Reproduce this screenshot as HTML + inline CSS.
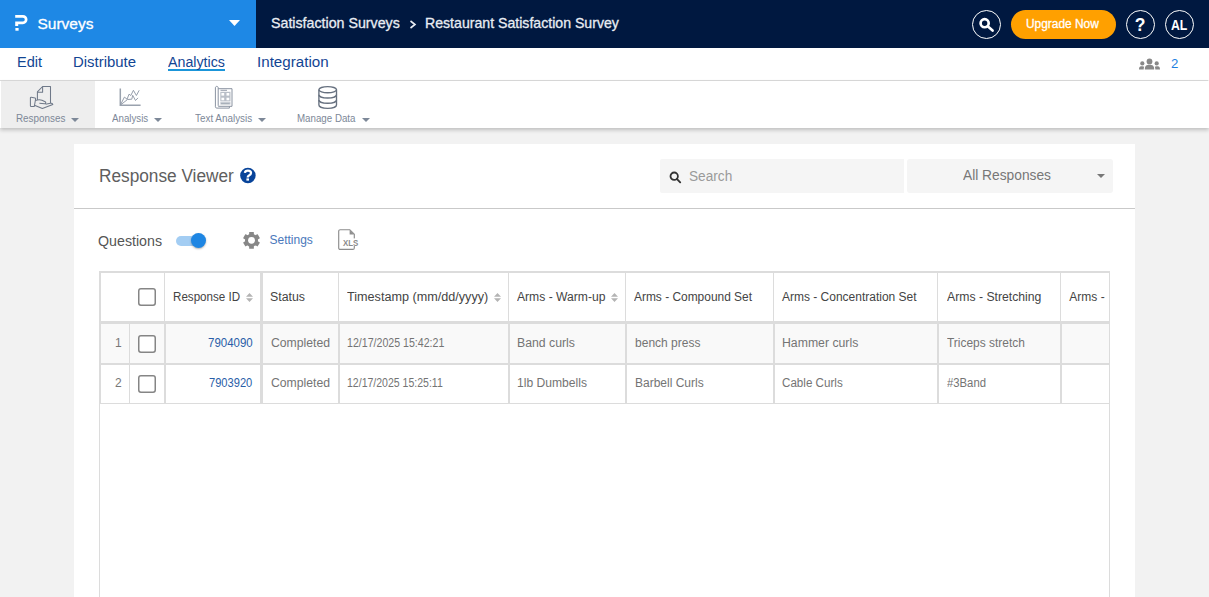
<!DOCTYPE html>
<html><head><meta charset="utf-8"><title>Response Viewer</title>
<style>
html,body{margin:0;padding:0;width:1209px;height:597px;overflow:hidden;background:#f2f2f2;font-family:"Liberation Sans",sans-serif;}
.t{position:absolute;white-space:pre;transform-origin:0 0;}
.a{position:absolute;}
svg{position:absolute;overflow:visible;}
</style></head><body>
<!-- header -->
<div class="a" style="left:0;top:0;width:256px;height:48px;background:#1e88e5"></div>
<div class="a" style="left:256px;top:0;width:953px;height:48px;background:#001840"></div>
<!-- logo -->
<svg style="left:0;top:0" width="40" height="40" viewBox="0 0 40 40">
 <path fill="#fff" d="M15.2 15 H22.9 A4.6 4.6 0 0 1 22.9 24.2 H18.2 V26.1 H15.2 V21.5 H22.9 A1.9 1.9 0 0 0 22.9 17.7 H15.2 Z"/>
 <rect x="15.4" y="28" width="3.2" height="2.7" fill="#fff"/>
</svg>
<svg style="left:229px;top:20px" width="11" height="7" viewBox="0 0 11 7"><path d="M0 0 H11 L5.5 6 Z" fill="#fff"/></svg>
<svg style="left:409px;top:20.3px" width="8" height="9" viewBox="0 0 8 9"><path d="M1.5 1 L6 4.5 L1.5 8" fill="none" stroke="#e9edf3" stroke-width="1.6"/></svg>
<!-- right icons -->
<div class="a" style="left:972px;top:10px;width:27px;height:27px;border:1px solid #fff;border-radius:50%"></div>
<svg style="left:979px;top:16px" width="16" height="16" viewBox="0 0 16 16"><circle cx="5.65" cy="7.2" r="4.05" fill="none" stroke="#fff" stroke-width="2.7"/><path d="M8.7 10.3 L13.6 14.6" stroke="#fff" stroke-width="2.6" stroke-linecap="round"/></svg>
<div class="a" style="left:1011px;top:10px;width:105px;height:29px;background:#ffa000;border-radius:15px"></div>
<div class="a" style="left:1126px;top:10px;width:27px;height:27px;border:1px solid #fff;border-radius:50%"></div>
<div class="a" style="left:1165px;top:10px;width:27px;height:27px;border:1px solid #fff;border-radius:50%"></div>

<!-- nav -->
<div class="a" style="left:0;top:48px;width:1209px;height:32px;background:#fff"></div>
<div class="a" style="left:0;top:80px;width:1208px;height:1px;background:#dcdcdc"></div>
<div class="a" style="left:168px;top:69px;width:57px;height:2px;background:#1b95d9"></div>
<svg style="left:1138px;top:58px" width="23" height="12" viewBox="0 0 23 12"><circle cx="11.5" cy="3.4" r="2.9" fill="#888"/><path d="M6.8 11.6 C6.8 7.4 8.8 6.8 11.5 6.8 C14.2 6.8 16.2 7.4 16.2 11.6 Z" fill="#888"/><circle cx="4.3" cy="5.4" r="2.1" fill="#888"/><path d="M1 11.6 C1 8.6 2.2 8.2 4.3 8.2 C5.3 8.2 5.9 8.4 6.2 8.7 C5.8 9.6 5.7 10.5 5.7 11.6 Z" fill="#888"/><circle cx="18.7" cy="5.4" r="2.1" fill="#888"/><path d="M22 11.6 C22 8.6 20.8 8.2 18.7 8.2 C17.7 8.2 17.1 8.4 16.8 8.7 C17.2 9.6 17.3 10.5 17.3 11.6 Z" fill="#888"/></svg>
<!-- toolbar -->
<div class="a" style="left:0;top:81px;width:1209px;height:47px;background:#fff;box-shadow:0 2px 4px rgba(0,0,0,0.22)"></div>
<div class="a" style="left:1px;top:81px;width:94px;height:47px;background:#eeeeee"></div>
<!-- responses icon -->
<svg style="left:27px;top:84px" width="29" height="27" viewBox="27 84 29 27" fill="none" stroke="#6f7989" stroke-width="1.05" stroke-linejoin="round">
 <path d="M37.4 100 V91.9 L42.6 86.5 H50.5 V103"/>
 <path d="M37.4 92.2 H42.6 V86.5"/>
 <path d="M30.4 97.8 C30.4 97.4 30.8 97.3 31.2 97.3 L35 98 C35.5 98.1 35.7 98.5 35.6 99 L34.4 106 C34.3 106.4 34 106.5 33.6 106.5 H31.1 C30.7 106.5 30.4 106.2 30.4 105.8 Z"/>
 <path d="M35.4 100.6 C37.5 99.6 39.8 99.3 42 100.2 L45.2 101.8 C46.2 102.4 45.8 103.8 44.6 103.7 L39.4 103.2"/>
 <path d="M34.4 105.2 L42.4 108.5 L52.8 104.4 C52.4 103.4 51.6 103.1 50.5 103.3 L45.5 104.3"/>
</svg>
<!-- analysis icon -->
<svg style="left:114px;top:84px" width="32" height="26" viewBox="114 84 32 26" fill="none" stroke="#8a93a1" stroke-width="0.9" stroke-linejoin="miter">
 <path d="M120.3 88.4 V105.3 H140.6" stroke-width="1.5" stroke="#9aa2ae"/>
 <path d="M120.6 104.6 L124.4 97.1 L127.1 99.2 L129 94.2 L130.8 95.5 L133.4 90.3 L136.4 95.5 L139.2 90.3"/>
 <path d="M121 104.6 L127.5 99.5 L131.8 99.2 L132.7 95.3 L135.5 100.5 L138 97.9"/>
</svg>
<!-- text analysis icon -->
<svg style="left:210px;top:84px" width="28" height="28" viewBox="210 84 28 28" fill="none" stroke="#8a93a1" stroke-width="1">
 <path d="M215.4 106.8 V88 C215.4 86.9 216 86.4 216.8 86.4 C217.6 86.4 218.2 86.9 218.2 88 V105.8"/>
 <path d="M215.4 106.8 C215.4 107.6 216 108.1 216.8 108.1 H229.4 V106.3"/>
 <path d="M218.2 88.7 H232 V106.3 H218.2"/>
 <rect x="220.3" y="91.8" width="10.2" height="9.6" fill="#b9bfc8" stroke="none"/>
 <rect x="221.4" y="93" width="2.8" height="2.6" fill="#fff" stroke="none"/><rect x="226.5" y="93" width="2.8" height="2.6" fill="#fff" stroke="none"/>
 <rect x="221.4" y="97.7" width="2.8" height="2.6" fill="#fff" stroke="none"/><rect x="226.5" y="97.7" width="2.8" height="2.6" fill="#fff" stroke="none"/>
 <path d="M220.5 90.3 H227" stroke-width="0.9"/>
 <rect x="220.3" y="102.1" width="10.2" height="2.5" fill="#c3c8d0" stroke="none"/>
 <path d="M221 103.6 H229.6" stroke="#9aa2ae" stroke-width="0.7"/>
</svg>
<!-- database icon -->
<svg style="left:314px;top:83px" width="28" height="28" viewBox="314 83 28 28" fill="none" stroke="#66707f" stroke-width="1.35">
 <ellipse cx="327.7" cy="89.7" rx="8.8" ry="3.1"/>
 <path d="M318.9 89.7 V105.1 C318.9 106.9 322.8 108.3 327.7 108.3 C332.6 108.3 336.5 106.9 336.5 105.1 V89.7"/>
 <path d="M318.9 94.8 C318.9 96.6 322.8 98 327.7 98 C332.6 98 336.5 96.6 336.5 94.8"/>
 <path d="M318.9 100 C318.9 101.8 322.8 103.2 327.7 103.2 C332.6 103.2 336.5 101.8 336.5 100"/>
</svg>
<svg style="left:71px;top:118px" width="8" height="4" viewBox="0 0 8 4"><path d="M0 0 H8 L4 4 Z" fill="#7d8898"/></svg>
<svg style="left:154px;top:118px" width="8" height="4" viewBox="0 0 8 4"><path d="M0 0 H8 L4 4 Z" fill="#7d8898"/></svg>
<svg style="left:258px;top:118px" width="8" height="4" viewBox="0 0 8 4"><path d="M0 0 H8 L4 4 Z" fill="#7d8898"/></svg>
<svg style="left:362px;top:118px" width="8" height="4" viewBox="0 0 8 4"><path d="M0 0 H8 L4 4 Z" fill="#7d8898"/></svg>
<!-- card -->
<div class="a" style="left:74px;top:144px;width:1061px;height:460px;background:#fff"></div>
<div class="a" style="left:74px;top:208px;width:1061px;height:1px;background:#c9c9c9"></div>
<svg style="left:236px;top:164px" width="24" height="24" viewBox="236 164 24 24"><circle cx="247.9" cy="175.4" r="7.75" fill="#08449a"/><path d="M244.9 172.9 C245.1 171.3 246.3 170.6 247.9 170.6 C249.8 170.6 251 171.6 251 173.1 C251 174.4 250 175 249 175.5 C248.2 175.9 247.7 176.4 247.7 177.5" fill="none" stroke="#fff" stroke-width="2.3"/><rect x="246.4" y="178.4" width="2.6" height="2.2" fill="#fff"/></svg>
<div class="a" style="left:660px;top:159px;width:244px;height:34px;background:#f5f5f5;border-radius:2px 0 0 2px"></div>
<svg style="left:669px;top:171px" width="13" height="13" viewBox="0 0 13 13"><circle cx="5.2" cy="5.2" r="3.7" fill="none" stroke="#333" stroke-width="1.8"/><path d="M7.8 7.9 L11.2 11.3" stroke="#333" stroke-width="1.9" stroke-linecap="round"/></svg>
<div class="a" style="left:907px;top:159px;width:206px;height:34px;background:#f5f5f5;border-radius:3px"></div>
<svg style="left:1097px;top:174px" width="8" height="4" viewBox="0 0 8 4"><path d="M0 0 H8 L4 4 Z" fill="#777"/></svg>
<!-- toggle -->
<div class="a" style="left:176px;top:236px;width:26px;height:10px;background:#a3cdf3;border-radius:5px"></div>
<div class="a" style="left:191px;top:233px;width:15px;height:15px;background:#1e86e3;border-radius:50%;box-shadow:0 1px 2px rgba(0,0,0,0.3)"></div>
<!-- gear -->
<svg style="left:238px;top:228px" width="26" height="26" viewBox="238 228 26 26">
 <g fill="#878787" transform="translate(251.5 240.3)">
  <circle r="6.5"/>
  <rect x="-2.35" y="-8.4" width="4.7" height="4.5" rx="0.5"/>
  <rect x="-2.35" y="-8.4" width="4.7" height="4.5" rx="0.5" transform="rotate(60)"/>
  <rect x="-2.35" y="-8.4" width="4.7" height="4.5" rx="0.5" transform="rotate(120)"/>
  <rect x="-2.35" y="-8.4" width="4.7" height="4.5" rx="0.5" transform="rotate(180)"/>
  <rect x="-2.35" y="-8.4" width="4.7" height="4.5" rx="0.5" transform="rotate(240)"/>
  <rect x="-2.35" y="-8.4" width="4.7" height="4.5" rx="0.5" transform="rotate(300)"/>
  <circle r="3.4" fill="#fff"/>
 </g>
</svg>
<!-- xls -->
<svg style="left:338px;top:229px" width="22" height="22" viewBox="0 0 22 22">
 <path d="M0.7 2.2 C0.7 1.3 1.3 0.7 2.2 0.7 H11.8 L16.3 5.2 V18.9 C16.3 19.8 15.7 20.4 14.8 20.4 H2.2 C1.3 20.4 0.7 19.8 0.7 18.9 Z" fill="none" stroke="#8c8c8c" stroke-width="1.15"/>
 <path d="M11.6 0.9 V5.4 H16.1 Z" fill="#8f8f8f"/>
 <rect x="3.5" y="9.4" width="18" height="7.6" fill="#fff"/>
 <text x="4.9" y="16.7" font-family="Liberation Sans" font-weight="700" font-size="9.5" fill="#8a8a8a" textLength="15.3" lengthAdjust="spacingAndGlyphs">XLS</text>
</svg>
<!-- table -->
<div class="a" style="left:99px;top:271px;width:1011px;height:340px;border-left:1px solid #dcdcdc;border-right:1px solid #dcdcdc;box-sizing:border-box"></div>
<div class="a" style="left:99px;top:271px;width:1011px;height:2px;background:#dcdcdc"></div>
<div class="a" style="left:100px;top:273px;width:1px;height:130px;background:#dcdcdc"></div>
<div class="a" style="left:100px;top:321px;width:1009px;height:3px;background:#dcdcdc"></div>
<div class="a" style="left:101px;top:324px;width:1008px;height:39px;background:#f9f9f9"></div>
<div class="a" style="left:101px;top:363px;width:1008px;height:2px;background:#dcdcdc"></div>
<div class="a" style="left:100px;top:403px;width:1009px;height:1px;background:#dcdcdc"></div>
<!-- vertical dividers: header 1px, body 2px -->
<div class="a" style="left:129px;top:324px;width:1px;height:79px;background:#dcdcdc"></div>
<div class="a" style="left:164px;top:273px;width:1px;height:48px;background:#dcdcdc"></div>
<div class="a" style="left:164px;top:324px;width:2px;height:79px;background:#dcdcdc"></div>
<div class="a" style="left:260px;top:273px;width:3px;height:130px;background:#dcdcdc"></div>
<div class="a" style="left:338px;top:273px;width:1px;height:48px;background:#dcdcdc"></div>
<div class="a" style="left:338px;top:324px;width:2px;height:79px;background:#dcdcdc"></div>
<div class="a" style="left:508px;top:273px;width:1px;height:48px;background:#dcdcdc"></div>
<div class="a" style="left:508px;top:324px;width:2px;height:79px;background:#dcdcdc"></div>
<div class="a" style="left:625px;top:273px;width:1px;height:48px;background:#dcdcdc"></div>
<div class="a" style="left:625px;top:324px;width:2px;height:79px;background:#dcdcdc"></div>
<div class="a" style="left:773px;top:273px;width:1px;height:48px;background:#dcdcdc"></div>
<div class="a" style="left:773px;top:324px;width:2px;height:79px;background:#dcdcdc"></div>
<div class="a" style="left:937px;top:273px;width:1px;height:48px;background:#dcdcdc"></div>
<div class="a" style="left:937px;top:324px;width:2px;height:79px;background:#dcdcdc"></div>
<div class="a" style="left:1060px;top:273px;width:1px;height:48px;background:#dcdcdc"></div>
<div class="a" style="left:1060px;top:324px;width:2px;height:79px;background:#dcdcdc"></div>
<!-- checkboxes -->
<svg style="left:138px;top:288px" width="18" height="18" viewBox="0 0 18 18"><rect x="0.75" y="0.75" width="16.5" height="16.5" rx="2.2" fill="#fff" stroke="#858585" stroke-width="1.5"/></svg>
<svg style="left:138px;top:335px" width="18" height="18" viewBox="0 0 18 18"><rect x="0.75" y="0.75" width="16.5" height="16.5" rx="2.2" fill="#fff" stroke="#858585" stroke-width="1.5"/></svg>
<svg style="left:138px;top:375px" width="18" height="18" viewBox="0 0 18 18"><rect x="0.75" y="0.75" width="16.5" height="16.5" rx="2.2" fill="#fff" stroke="#858585" stroke-width="1.5"/></svg>
<!-- sort arrows -->
<svg style="left:246px;top:293px" width="8" height="9" viewBox="0 0 8 9"><path d="M0 3.8 L3.5 0 L7 3.8 Z M0 5.2 H7 L3.5 9 Z" fill="#b4b4b4"/></svg>
<svg style="left:494px;top:293px" width="8" height="9" viewBox="0 0 8 9"><path d="M0 3.8 L3.5 0 L7 3.8 Z M0 5.2 H7 L3.5 9 Z" fill="#b4b4b4"/></svg>
<svg style="left:611px;top:293px" width="8" height="9" viewBox="0 0 8 9"><path d="M0 3.8 L3.5 0 L7 3.8 Z M0 5.2 H7 L3.5 9 Z" fill="#b4b4b4"/></svg>
<div class="t" style="left:37.50px;top:15.80px;font-size:15.5px;line-height:15.5px;color:#ffffff;-webkit-text-stroke:0.3px #ffffff">Surveys</div>
<div class="t" style="left:270.75px;top:15.20px;font-size:15.0px;line-height:15.0px;color:#e9edf3;-webkit-text-stroke:0.3px #e9edf3;transform:scaleX(0.9481)">Satisfaction Surveys</div>
<div class="t" style="left:425.06px;top:15.20px;font-size:15.0px;line-height:15.0px;color:#e9edf3;-webkit-text-stroke:0.3px #e9edf3;transform:scaleX(0.9415)">Restaurant Satisfaction Survey</div>
<div class="t" style="left:1026.01px;top:17.70px;font-size:12.0px;line-height:12.0px;color:#ffffff;-webkit-text-stroke:0.3px #ffffff;transform:scaleX(0.9918)">Upgrade Now</div>
<div class="t" style="left:1134.80px;top:16.90px;font-size:17.5px;line-height:17.5px;color:#ffffff;font-weight:700">?</div>
<div class="t" style="left:1171.40px;top:18.20px;font-size:14.5px;line-height:14.5px;color:#ffffff;font-weight:700;transform:scaleX(0.8474)">AL</div>
<div class="t" style="left:16.86px;top:54.90px;font-size:14px;line-height:14px;color:#124593;transform:scaleX(1.0391)">Edit</div>
<div class="t" style="left:72.73px;top:54.90px;font-size:14px;line-height:14px;color:#124593;transform:scaleX(1.0655)">Distribute</div>
<div class="t" style="left:168.30px;top:54.90px;font-size:14.0px;line-height:14.0px;color:#124593;transform:scaleX(1.0161)">Analytics</div>
<div class="t" style="left:256.52px;top:54.90px;font-size:14px;line-height:14px;color:#124593;transform:scaleX(1.0828)">Integration</div>
<div class="t" style="left:1171.20px;top:57.90px;font-size:12.0px;line-height:12.0px;color:#1e7fe0;transform:scaleX(1.1000)">2</div>
<div class="t" style="left:16.46px;top:112.60px;font-size:10.5px;line-height:10.5px;color:#7d8898;transform:scaleX(0.9392)">Responses</div>
<div class="t" style="left:111.80px;top:112.60px;font-size:10.5px;line-height:10.5px;color:#7d8898;transform:scaleX(0.9256)">Analysis</div>
<div class="t" style="left:194.60px;top:112.60px;font-size:10.5px;line-height:10.5px;color:#7d8898;transform:scaleX(0.9426)">Text Analysis</div>
<div class="t" style="left:297.37px;top:112.60px;font-size:10.5px;line-height:10.5px;color:#7d8898;transform:scaleX(0.9274)">Manage Data</div>
<div class="t" style="left:99.11px;top:168.00px;font-size:17.5px;line-height:17.5px;color:#5e5e5e;transform:scaleX(0.9853)">Response Viewer</div>
<div class="t" style="left:689.23px;top:168.90px;font-size:14.0px;line-height:14.0px;color:#9a9a9a;transform:scaleX(0.9744)">Search</div>
<div class="t" style="left:963.40px;top:168.20px;font-size:14.0px;line-height:14.0px;color:#777777;transform:scaleX(0.9831)">All Responses</div>
<div class="t" style="left:98.48px;top:233.80px;font-size:14.0px;line-height:14.0px;color:#555555;transform:scaleX(1.0161)">Questions</div>
<div class="t" style="left:269.50px;top:233.90px;font-size:12px;line-height:12px;color:#4a78bb">Settings</div>
<div class="t" style="left:172.63px;top:290.80px;font-size:12.0px;line-height:12.0px;color:#444444;transform:scaleX(0.9676)">Response ID</div>
<div class="t" style="left:269.97px;top:290.80px;font-size:12.0px;line-height:12.0px;color:#444444;transform:scaleX(1.0303)">Status</div>
<div class="t" style="left:347.10px;top:290.80px;font-size:12.0px;line-height:12.0px;color:#444444;transform:scaleX(1.0522)">Timestamp (mm/dd/yyyy)</div>
<div class="t" style="left:517.20px;top:290.80px;font-size:12.0px;line-height:12.0px;color:#444444;transform:scaleX(1.0103)">Arms - Warm-up</div>
<div class="t" style="left:634.30px;top:290.80px;font-size:12.0px;line-height:12.0px;color:#444444;transform:scaleX(0.9941)">Arms - Compound Set</div>
<div class="t" style="left:781.90px;top:290.80px;font-size:12.0px;line-height:12.0px;color:#444444">Arms - Concentration Set</div>
<div class="t" style="left:946.60px;top:290.80px;font-size:12.0px;line-height:12.0px;color:#444444;transform:scaleX(1.0185)">Arms - Stretching</div>
<div class="t" style="left:1069.30px;top:290.80px;font-size:12.0px;line-height:12.0px;color:#444444">Arms - </div>
<div class="t" style="left:115.10px;top:337.00px;font-size:12.0px;line-height:12.0px;color:#777777">1</div>
<div class="t" style="left:207.64px;top:337.10px;font-size:12.0px;line-height:12.0px;color:#2a5ea8;transform:scaleX(0.9556)">7904090</div>
<div class="t" style="left:271.18px;top:337.10px;font-size:12.0px;line-height:12.0px;color:#747474;transform:scaleX(1.0179)">Completed</div>
<div class="t" style="left:347.12px;top:337.10px;font-size:12.0px;line-height:12.0px;color:#747474;transform:scaleX(0.8844)">12/17/2025 15:42:21</div>
<div class="t" style="left:517.28px;top:337.10px;font-size:12.0px;line-height:12.0px;color:#747474;transform:scaleX(1.0218)">Band curls</div>
<div class="t" style="left:635.10px;top:337.10px;font-size:12.0px;line-height:12.0px;color:#747474">bench press</div>
<div class="t" style="left:781.98px;top:337.10px;font-size:12.0px;line-height:12.0px;color:#747474;transform:scaleX(1.0219)">Hammer curls</div>
<div class="t" style="left:947.10px;top:337.10px;font-size:12.0px;line-height:12.0px;color:#747474;transform:scaleX(0.9949)">Triceps stretch</div>
<div class="t" style="left:115.10px;top:377.10px;font-size:12px;line-height:12px;color:#777777">2</div>
<div class="t" style="left:208.97px;top:377.10px;font-size:12.0px;line-height:12.0px;color:#2a5ea8;transform:scaleX(0.9267)">7903920</div>
<div class="t" style="left:271.18px;top:377.10px;font-size:12.0px;line-height:12.0px;color:#747474;transform:scaleX(1.0179)">Completed</div>
<div class="t" style="left:347.12px;top:377.10px;font-size:12.0px;line-height:12.0px;color:#747474;transform:scaleX(0.8769)">12/17/2025 15:25:11</div>
<div class="t" style="left:517.29px;top:377.10px;font-size:12.0px;line-height:12.0px;color:#747474;transform:scaleX(1.0088)">1lb Dumbells</div>
<div class="t" style="left:635.00px;top:377.10px;font-size:12.0px;line-height:12.0px;color:#747474">Barbell Curls</div>
<div class="t" style="left:782.03px;top:377.10px;font-size:12.0px;line-height:12.0px;color:#747474;transform:scaleX(0.9689)">Cable Curls</div>
<div class="t" style="left:947.10px;top:377.10px;font-size:12.0px;line-height:12.0px;color:#747474;transform:scaleX(0.9415)">#3Band</div>
<!-- clip the last header text -->
<div class="a" style="left:1110px;top:273px;width:25px;height:48px;background:#fff"></div>
</body></html>
